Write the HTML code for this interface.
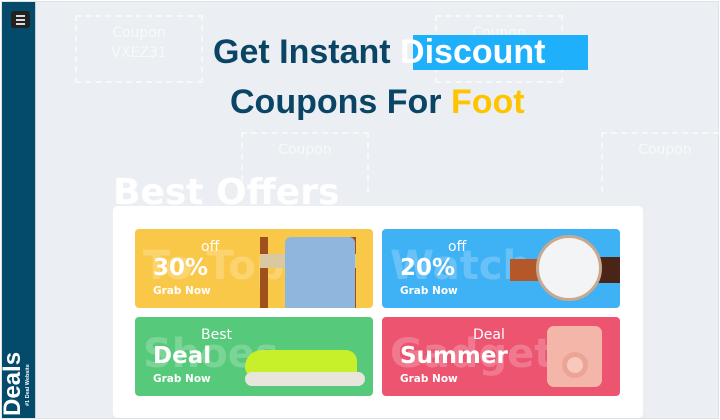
<!DOCTYPE html>
<html><head><style>
*{margin:0;padding:0;box-sizing:border-box}
body{width:720px;height:420px;overflow:hidden;background:#fff;position:relative;font-family:"Liberation Sans",sans-serif}
.frame{position:absolute;left:1px;top:1px;width:718px;height:418px;background:#ebeff3;border:1px solid #dde2e7}
.side{position:absolute;left:2px;top:2px;width:34px;height:416px;background:#034a6b;border-right:1px solid #ccc}
.menu{position:absolute;left:9px;top:9px;width:19px;height:17px;background:#222;border-radius:3px}
.menu i{position:absolute;left:5px;width:9px;height:2px;background:#ddd}
.cp{position:absolute;width:128px;height:68px;border:2px dashed rgba(255,255,255,.6);color:rgba(255,255,255,.6);font-family:"DejaVu Sans",sans-serif;font-size:14px;text-align:center;padding-top:8px}
.h{position:absolute;font-weight:bold;font-size:34px;color:#0b4566;white-space:nowrap}
.best{position:absolute;left:113px;top:172px;font-family:"DejaVu Sans",sans-serif;font-weight:bold;font-size:36px;color:#fff}
.card{position:absolute;left:113px;top:206px;width:530px;height:212px;background:#fff;border-radius:5px}
.b{position:absolute;width:238px;height:79px;border-radius:4px;overflow:hidden;font-family:"DejaVu Sans",sans-serif;color:#fff}
.bg{position:absolute;left:8px;top:14px;font-size:40px;font-weight:bold;color:rgba(255,255,255,.22);white-space:nowrap}
.sm{position:absolute;font-size:14px}
.big{position:absolute;left:18px;font-size:23px;font-weight:bold}
.gn{position:absolute;left:18px;top:56px;font-size:10.5px;font-weight:bold}
</style></head><body>
<div class="frame"></div>
<div class="side"><div class="menu"><i style="top:4px"></i><i style="top:8px"></i><i style="top:12px"></i></div>
<div style="position:absolute;left:-22px;top:367px;transform:rotate(-90deg);color:#fff;font-weight:bold;font-size:24px;white-space:nowrap;width:66px">Deals</div>
<div style="position:absolute;left:-2px;top:373px;transform:rotate(-90deg);color:#fff;font-weight:bold;font-size:5.5px;white-space:nowrap;width:56px">#1 Deal Website</div>
</div>
<div class="cp" style="left:75px;top:15px">Coupon<div style="margin-top:4px">VXEZ31</div></div>
<div class="cp" style="left:435px;top:15px">Coupon</div>
<div class="cp" style="left:241px;top:132px;height:60px;border-bottom:none">Coupon</div>
<div class="cp" style="left:601px;top:132px;height:60px;border-bottom:none">Coupon</div>
<div style="position:absolute;left:413px;top:35px;width:175px;height:35px;background:#1eb0fb"></div>
<div class="h" style="left:213px;top:33px">Get Instant <span style="color:#fff">Discount</span></div>
<div class="h" style="left:230px;top:83px">Coupons For <span style="color:#ffc400">Foot</span></div>
<div class="best">Best Offers</div>
<div class="card"></div>
<div class="b" style="left:135px;top:229px;background:#fac848"><div class="bg">To Top</div>
<div style="position:absolute;left:125px;top:8px;width:8px;height:71px;background:#a0501a"></div>
<div style="position:absolute;left:213px;top:8px;width:8px;height:71px;background:#a0501a"></div>
<div style="position:absolute;left:125px;top:25px;width:96px;height:14px;background:#d9c8a0"></div>
<div style="position:absolute;left:150px;top:8px;width:70px;height:71px;background:#8fb6dc;border-radius:6px 6px 0 0"></div>
<div class="sm" style="left:66px;top:10px">off</div><div class="big" style="top:26px">30%</div><div class="gn">Grab Now</div></div>
<div class="b" style="left:382px;top:229px;background:#3fb1f5"><div class="bg">Watch</div>
<div style="position:absolute;left:128px;top:30px;width:110px;height:22px;background:#b4582a"></div>
<div style="position:absolute;left:200px;top:28px;width:38px;height:26px;background:#4a2416"></div>
<div style="position:absolute;left:154px;top:6px;width:66px;height:66px;border-radius:50%;background:#f2f4f6;border:3px solid #c9a98d"></div>
<div class="sm" style="left:66px;top:10px">off</div><div class="big" style="top:26px">20%</div><div class="gn">Grab Now</div></div>
<div class="b" style="left:135px;top:317px;background:#56c97a"><div class="bg">Shoes</div>
<div style="position:absolute;left:110px;top:33px;width:112px;height:28px;background:#c8f02a;border-radius:30px 20px 6px 20px"></div>
<div style="position:absolute;left:110px;top:55px;width:120px;height:14px;background:#e8e6dc;border-radius:8px"></div>
<div class="sm" style="left:66px;top:10px">Best</div><div class="big" style="top:26px">Deal</div><div class="gn">Grab Now</div></div>
<div class="b" style="left:382px;top:317px;background:#ec5470"><div class="bg">Gadgets</div>
<div style="position:absolute;left:165px;top:9px;width:55px;height:61px;background:#f4b6a8;border-radius:7px"></div>
<div style="position:absolute;left:180px;top:35px;width:26px;height:26px;border-radius:50%;background:#f8c8bb;border:5px solid #eaa596"></div>
<div class="sm" style="left:91px;top:10px">Deal</div><div class="big" style="top:26px">Summer</div><div class="gn">Grab Now</div></div>
</body></html>
